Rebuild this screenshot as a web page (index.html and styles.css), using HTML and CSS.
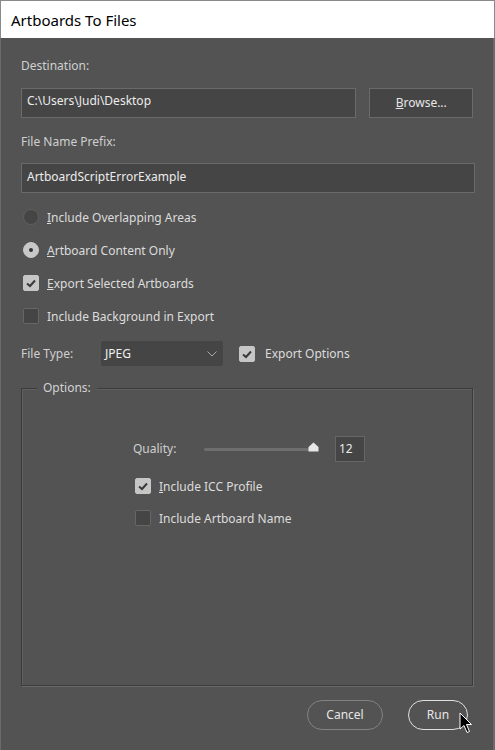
FILE: index.html
```html
<!DOCTYPE html>
<html>
<head>
<meta charset="utf-8">
<link rel="stylesheet" href="styles.css">
</head>
<body>
<div class="window">
  <div class="titlebar">Artboards To Files</div>
  <div class="content">
    <div class="label lbl-dest">Destination:</div>
    <div class="row-dest">
      <div class="field field-dest">C:\Users\Judi\Desktop</div>
      <div class="btn-browse"><u>B</u>rowse...</div>
    </div>
    <div class="label lbl-prefix">File Name Prefix:</div>
    <div class="field field-prefix">ArtboardScriptErrorExample</div>

    <div class="opt opt-first"><span class="radio"></span><span><u>I</u>nclude Overlapping Areas</span></div>
    <div class="opt"><span class="radio on"></span><span><u>A</u>rtboard Content Only</span></div>
    <div class="opt"><span class="check on"><svg viewBox="0 0 16 16" width="16" height="16"><polyline points="4,8.5 7,11 12,5.5" fill="none" stroke="#3a3a3a" stroke-width="2"/></svg></span><span><u>E</u>xport Selected Artboards</span></div>
    <div class="opt"><span class="check"></span><span>Include Background in Export</span></div>

    <div class="row-type">
      <span class="label type-label">File Type:</span>
      <div class="select"><span>JPEG</span><svg width="10" height="6" viewBox="0 0 10 6"><polyline points="0.5,0.5 5,5 9.5,0.5" fill="none" stroke="#a8a8a8" stroke-width="1"/></svg></div>
      <span class="check on"><svg viewBox="0 0 16 16" width="16" height="16"><polyline points="4,8.5 7,11 12,5.5" fill="none" stroke="#3a3a3a" stroke-width="2"/></svg></span>
      <span class="label eo-label">Export Options</span>
    </div>

    <div class="group">
      <div class="legend">Options:</div>
      <div class="group-inner">
        <div class="quality">
          <span class="label q-label">Quality:</span>
          <div class="slider">
            <div class="track"></div>
            <svg class="thumb" width="11" height="10" viewBox="0 0 11 10"><path d="M5.5 0.5 L10.5 5 L10.5 9.5 L0.5 9.5 L0.5 5 Z" fill="#e6e6e6"/></svg>
          </div>
          <div class="numbox">12</div>
        </div>
        <div class="opt sub"><span class="check on"><svg viewBox="0 0 16 16" width="16" height="16"><polyline points="4,8.5 7,11 12,5.5" fill="none" stroke="#3a3a3a" stroke-width="2"/></svg></span><span><u>I</u>nclude ICC Profile</span></div>
        <div class="opt sub"><span class="check"></span><span>Include Artboard Name</span></div>
      </div>
    </div>

    <div class="buttons">
      <div class="btn cancel">Cancel</div>
      <div class="btn run">Run
        <svg class="cursor" width="14" height="22" viewBox="0 0 14 22"><path d="M1 1 L1 17 L5 13.5 L8 20.5 L10.5 19.5 L7.5 12.5 L12.5 12.5 Z" fill="#000" stroke="#fff" stroke-width="1"/></svg>
      </div>
    </div>
  </div>
</div>
</body>
</html>
```

FILE: styles.css
```css
html, body {
  margin: 0;
  padding: 0;
  background: #535353;
}
.window {
  width: 495px;
  height: 750px;
  box-sizing: border-box;
  display: flex;
  flex-direction: column;
  font-family: "Noto Sans", "Open Sans", sans-serif;
  font-size: 12px;
  color: #d2d2d2;
}
.titlebar {
  height: 38px;
  background: #ffffff;
  color: #000;
  font-size: 15px;
  line-height: 38px;
  padding-left: 10px;
  box-sizing: border-box;
  border: 1px solid #8a8a8a;
  border-bottom: none;
}
.content {
  flex: 1;
  padding: 0 20px 0 20px;
  border-left: 1px solid #6a6a6a;
  border-right: 2px solid #6a6a6a;
  display: flex;
  flex-direction: column;
}
.label {
  line-height: 16px;
  color: #cfcfcf;
}
.lbl-dest { margin-top: 20px; }
.row-dest {
  display: flex;
  gap: 13px;
  margin-top: 14px;
}
.field {
  height: 30px;
  box-sizing: border-box;
  background: #454545;
  border: 1px solid #6a6a6a;
  line-height: 26px;
  padding-left: 5px;
  color: #ececec;
}
.field-dest { width: 337px; line-height: 23px; }
.btn-browse {
  width: 104px;
  height: 30px;
  box-sizing: border-box;
  background: #454545;
  border: 1px solid #6a6a6a;
  line-height: 28px;
  text-align: center;
  color: #e6e6e6;
}
.lbl-prefix { margin-top: 16px; }
.field-prefix { margin-top: 13px; width: 454px; }
.opt {
  display: flex;
  align-items: center;
  gap: 8px;
  height: 16px;
  margin-top: 17px;
  color: #dcdcdc;
}
.opt-first { margin-top: 16px; }
.radio {
  width: 16px;
  height: 16px;
  border-radius: 50%;
  background: #454545;
  border: 1px solid #5f5f5f;
  box-sizing: border-box;
  margin-left: 2px;
  position: relative;
}
.radio.on {
  background: #c8c8c8;
  border-color: #c8c8c8;
}
.radio.on::after {
  content: "";
  position: absolute;
  left: 5px;
  top: 5px;
  width: 4px;
  height: 4px;
  border-radius: 50%;
  background: #333;
}
.check {
  width: 16px;
  height: 16px;
  box-sizing: border-box;
  background: #454545;
  border: 1px solid #666;
  border-radius: 2px;
  margin-left: 2px;
  display: inline-flex;
  flex: none;
}
.check.on {
  background: #c6c6c6;
  border-color: #c6c6c6;
}
.check svg { margin: -1px; }
.row-type {
  display: flex;
  align-items: center;
  margin-top: 17px;
  height: 25px;
}
.type-label { width: 80px; }
.select {
  width: 122px;
  height: 25px;
  box-sizing: border-box;
  background: #454545;
  border-radius: 2px;
  display: flex;
  align-items: center;
  justify-content: space-between;
  padding: 0 6px 0 4px;
  color: #f0f0f0;
  font-size: 12px;
  margin-right: 14px;
}
.eo-label { margin-left: 10px; color: #dcdcdc; }
.group {
  margin-top: 22px;
  height: 298px;
  border: 1px solid #3b3b3b;
  box-shadow: 1px 1px 0 #6a6a6a, inset 1px 1px 0 #5f5f5f;
  position: relative;
  box-sizing: border-box;
}
.legend {
  position: absolute;
  left: 15px;
  top: -9px;
  padding: 0 6px;
  background: #535353;
  line-height: 16px;
}
.group-inner {
  padding-left: 111px;
  padding-top: 47px;
  display: flex;
  flex-direction: column;
}
.quality {
  display: flex;
  align-items: center;
  height: 26px;
}
.q-label { width: 71px; }
.slider {
  position: relative;
  width: 114px;
  height: 10px;
  margin-right: 17px;
}
.track {
  position: absolute;
  left: 0;
  right: 0;
  top: 4px;
  height: 3px;
  border-radius: 2px;
  background: #6e6e6e;
}
.thumb {
  position: absolute;
  right: -1px;
  top: -2px;
}
.numbox {
  width: 30px;
  height: 26px;
  box-sizing: border-box;
  background: #454545;
  border: 1px solid #666;
  line-height: 24px;
  padding-left: 3px;
  color: #eaeaea;
}
.opt.sub { margin-top: 16px; }
.buttons {
  display: flex;
  justify-content: flex-end;
  gap: 25px;
  margin-top: 14px;
  padding-right: 5px;
}
.btn {
  height: 30px;
  box-sizing: border-box;
  border-radius: 15px;
  line-height: 28px;
  text-align: center;
  color: #e6e6e6;
  position: relative;
}
.cancel { width: 76px; border: 1px solid #828282; }
.run { width: 60px; border: 1px solid #e0e0e0; }
.cursor {
  position: absolute;
  left: 50px;
  top: 11px;
}
```
